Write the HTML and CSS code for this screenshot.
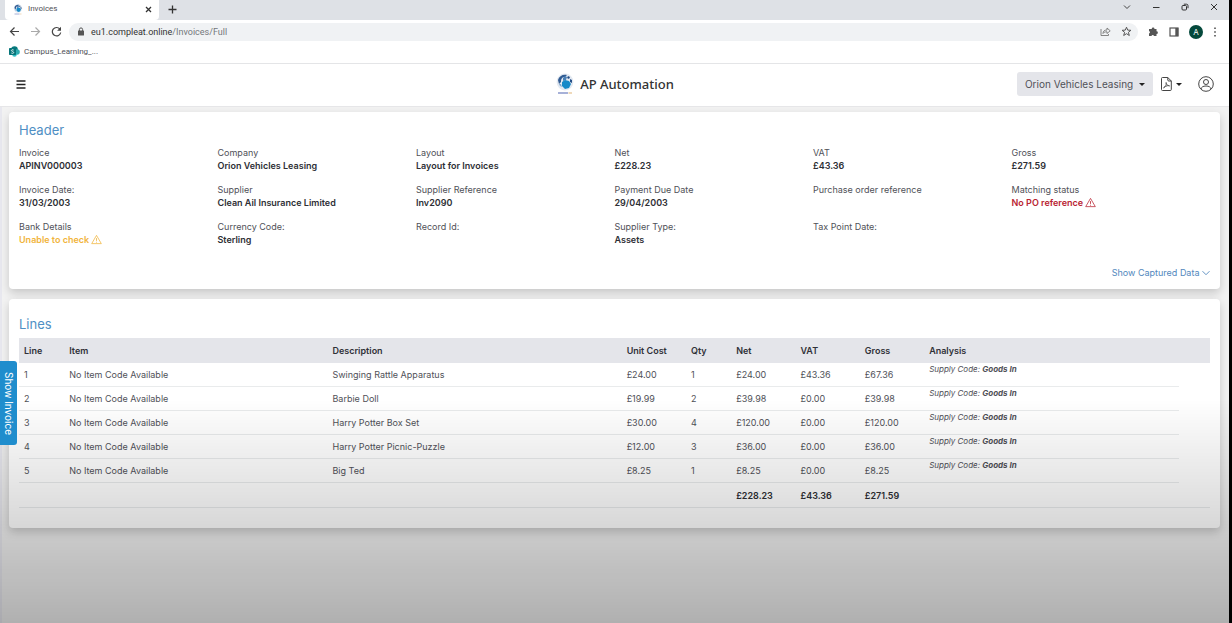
FILE: index.html
```html
<!DOCTYPE html>
<html lang="en">
<head>
<meta charset="utf-8">
<title>Invoices</title>
<link rel="stylesheet" href="styles.css">
</head>
<body>
<svg class="defs" aria-hidden="true">
  <symbol id="globe" viewBox="0 0 18 22">
    <circle cx="9" cy="9" r="8.4" fill="#e3e9f1"/>
    <path d="M2 7C3 3 7 1 11 2L9 4C6 4 5 6 5 9L3 11Z" fill="#315b92"/>
    <path d="M7 5l2-2 2 1-1 3-3 1z" fill="#4a80b5"/>
    <path d="M12 3l2 1-1 2-2-1zM14 6l2 1v3l-2-1z" fill="#244e86"/>
    <path d="M6 9l3-2 4 1 2 3-2 4-4 1-3-3z" fill="#1689c8"/>
    <path d="M3 11l2 0 1 3-2-1z" fill="#7ba7ce"/>
    <path d="M2 20h10" stroke="#8a97cb" stroke-width="1.500"/>
    <path d="M12.500 20h3.500" stroke="#e5c08b" stroke-width="1.200"/>
  </symbol>
  <symbol id="warn" viewBox="0 0 16 16">
    <path d="M8 2 15 14H1Z" fill="none" stroke="currentColor" stroke-linejoin="round" stroke-width="1.100"/>
    <path d="M8 6v4M8 11.300v1.200" stroke="currentColor" stroke-width="1.200"/>
  </symbol>
</svg>

<div class="tabs">
  <div class="tab">
    <svg class="favicon"><use href="#globe"/></svg>
    <span class="tab-name">Invoices</span>
    <button class="plain" aria-label="Close tab"><svg width="7" height="7" viewBox="0 0 7 7"><path d="M1 1l5 5M6 1L1 6" stroke="#333" stroke-width="1.300"/></svg></button>
  </div>
  <button class="plain new-tab" aria-label="New tab"><svg width="9" height="9" viewBox="0 0 9 9"><path d="M4.500 .5v8M.5 4.500h8" stroke="#333" stroke-width="1.300"/></svg></button>
  <div class="window-buttons">
    <button class="plain" aria-label="Search tabs"><svg width="8" height="8" viewBox="0 0 8 8"><path d="M1 2.500l3 3 3-3" fill="none" stroke="#444"/></svg></button>
    <button class="plain" aria-label="Minimize"><svg width="8" height="8" viewBox="0 0 8 8"><path d="M1 4.500h6.500" stroke="#333"/></svg></button>
    <button class="plain" aria-label="Restore"><svg width="8" height="8" viewBox="0 0 8 8"><rect x="1" y="2.500" width="4.500" height="4.500" rx="1" fill="none" stroke="#333"/><path d="M2.800 1.200h2.700q1.500 0 1.500 1.500v2.500" fill="none" stroke="#333"/></svg></button>
    <button class="plain" aria-label="Close"><svg width="8" height="8" viewBox="0 0 8 8"><path d="M1 1l6 6M7 1L1 7" stroke="#333"/></svg></button>
  </div>
</div>

<div class="toolbar">
  <button class="plain" aria-label="Back"><svg width="11" height="11" viewBox="0 0 11 11"><path d="M10 5.500H1.500M5.500 1.500l-4 4 4 4" fill="none" stroke="#444" stroke-width="1.200"/></svg></button>
  <button class="plain" aria-label="Forward"><svg width="11" height="11" viewBox="0 0 11 11"><path d="M1 5.500h8.500M5.500 1.500l4 4-4 4" fill="none" stroke="#aaa" stroke-width="1.200"/></svg></button>
  <button class="plain" aria-label="Reload"><svg width="11" height="11" viewBox="0 0 11 11"><path d="M8.800 3A4.200 4.200 0 1 0 9.700 6.500" fill="none" stroke="#444" stroke-width="1.200"/><path d="M10 .8v3.900H6.100z" fill="#444"/></svg></button>
  <div class="address">
    <svg width="8" height="9" viewBox="0 0 8 9"><rect x="1" y="3.500" width="6" height="5" rx=".6" fill="#555"/><path d="M2.400 4V2.500a1.600 1.600 0 0 1 3.200 0V4" fill="none" stroke="#555"/></svg>
    <span class="url">eu1.compleat.online<span class="path">/Invoices/Full</span></span>
    <button class="plain" aria-label="Share"><svg width="11" height="11" viewBox="0 0 11 11"><path d="M1 3v6.500h7.500V8M3 7.500C3 5 4.500 4 7 4V2l3.200 2.800L7 7.500V5.800C5 5.800 4 6.200 3 7.500z" fill="none" stroke="#777" stroke-width=".9"/></svg></button>
    <button class="plain" aria-label="Bookmark"><svg width="11" height="11" viewBox="0 0 11 11"><path d="M5.500 1.200l1.200 2.900 3.200.2-2.500 2 .9 3.200-2.800-1.800-2.800 1.800.9-3.200-2.500-2 3.200-.2z" fill="none" stroke="#555"/></svg></button>
  </div>
  <div class="extensions">
    <button class="plain" aria-label="Extensions"><svg width="11" height="11" viewBox="0 0 11 11"><path d="M1 3h2.700a1.400 1.400 0 1 1 2.800 0H8.500v2.300a1.400 1.400 0 1 1 0 2.800V10H6a1.300 1.300 0 0 0-2.500 0H1V7.500a1.300 1.300 0 0 0 0-2.500z" fill="#555"/></svg></button>
    <button class="plain" aria-label="Side panel"><svg width="10" height="10" viewBox="0 0 10 10"><rect x="1" y="1" width="8" height="8" fill="none" stroke="#555" stroke-width="1.200"/><path d="M6.300 1h3v8h-3z" fill="#555"/></svg></button>
    <button class="profile" aria-label="Profile A">A</button>
    <button class="plain" aria-label="Menu"><svg width="4" height="10" viewBox="0 0 4 10"><path d="M2 .5v1.500M2 4.200v1.500M2 8v1.500" stroke="#444" stroke-width="1.500"/></svg></button>
  </div>
</div>

<div class="bookmarks">
  <svg width="11" height="11" viewBox="0 0 11 11"><circle cx="5.500" cy="3.500" r="3.300" fill="#087a7d"/><circle cx="8" cy="6" r="2.800" fill="#2eabb0"/><circle cx="5.500" cy="8.500" r="2.300" fill="#31bfc4"/><rect y="2" width="7" height="7" rx=".7" fill="#06757a"/><path d="M4.700 4Q2.400 3.200 2.400 4.600C2.400 5.600 4.700 5.300 4.700 6.500 4.700 7.600 3 7.500 2.300 7" fill="none" stroke="#fff" stroke-width=".8"/></svg>
  <a href="#">Campus_Learning_...</a>
</div>

<header class="app-bar">
  <button class="plain" aria-label="Open menu"><svg width="10" height="9" viewBox="0 0 10 9"><path d="M.5 1h9M.5 4.500h9M.5 8h9" stroke="#222" stroke-width="1.500"/></svg></button>
  <h1><svg class="logo"><use href="#globe"/></svg>AP Automation</h1>
  <div class="actions">
    <button class="company">Orion Vehicles Leasing <span class="caret"></span></button>
    <button class="plain export" aria-label="Export PDF"><svg width="11" height="14" viewBox="0 0 11 14"><path d="M1.500.5h5.300l3.500 3.500v8.500q0 1-1 1h-7.800q-1 0-1-1v-11q0-1 1-1zM6.800.5V3q0 1 1 1h2.500" fill="none" stroke="#444"/><path d="M2.500 10.800C5 9.500 5.700 7 5.200 5.500 4.600 5.500 5 8 8.500 9 8.800 8.200 5 8.400 2.500 10.800z" fill="none" stroke="#444" stroke-width=".8"/></svg><span class="caret"></span></button>
    <button class="plain" aria-label="Account"><svg width="16" height="16" viewBox="0 0 16 16"><circle cx="8" cy="8" r="7.300" fill="none" stroke="#444"/><circle cx="8" cy="6" r="2.500" fill="none" stroke="#444"/><path d="M3 13c.5-2 2-3 5-3s4.500 1 5 3" fill="none" stroke="#444"/></svg></button>
  </div>
</header>

<main>
  <section class="card summary">
    <h2>Header</h2>
    <dl class="fields">
      <div><dt>Invoice</dt><dd>APINV000003</dd></div>
      <div><dt>Company</dt><dd>Orion Vehicles Leasing</dd></div>
      <div><dt>Layout</dt><dd>Layout for Invoices</dd></div>
      <div><dt>Net</dt><dd>£228.23</dd></div>
      <div><dt>VAT</dt><dd>£43.36</dd></div>
      <div><dt>Gross</dt><dd>£271.59</dd></div>
      <div><dt>Invoice Date:</dt><dd>31/03/2003</dd></div>
      <div><dt>Supplier</dt><dd>Clean Ail Insurance Limited</dd></div>
      <div><dt>Supplier Reference</dt><dd>Inv2090</dd></div>
      <div><dt>Payment Due Date</dt><dd>29/04/2003</dd></div>
      <div><dt>Purchase order reference</dt><dd></dd></div>
      <div><dt>Matching status</dt><dd class="error">No PO reference <svg class="warn"><use href="#warn"/></svg></dd></div>
      <div><dt>Bank Details</dt><dd class="caution">Unable to check <svg class="warn"><use href="#warn"/></svg></dd></div>
      <div><dt>Currency Code:</dt><dd>Sterling</dd></div>
      <div><dt>Record Id:</dt><dd></dd></div>
      <div><dt>Supplier Type:</dt><dd>Assets</dd></div>
      <div><dt>Tax Point Date:</dt><dd></dd></div>
    </dl>
    <a class="captured" href="#">Show Captured Data <svg width="8" height="8" viewBox="0 0 8 8"><path d="M.5 2.200L4 5.700l3.500-3.500" fill="none" stroke="currentColor" stroke-width=".9"/></svg></a>
  </section>

  <section class="card lines">
    <h2>Lines</h2>
    <table>
      <colgroup><col class="c-line"><col class="c-item"><col class="c-desc"><col class="c-money"><col class="c-qty"><col class="c-money"><col class="c-money"><col class="c-money"><col class="c-analysis"><col></colgroup>
      <thead><tr><th>Line</th><th>Item</th><th>Description</th><th>Unit Cost</th><th>Qty</th><th>Net</th><th>VAT</th><th>Gross</th><th>Analysis</th><th></th></tr></thead>
      <tbody>
        <tr><td>1</td><td>No Item Code Available</td><td>Swinging Rattle Apparatus</td><td>£24.00</td><td>1</td><td>£24.00</td><td>£43.36</td><td>£67.36</td><td class="analysis">Supply Code: <b>Goods In</b></td><td></td></tr>
        <tr><td>2</td><td>No Item Code Available</td><td>Barbie Doll</td><td>£19.99</td><td>2</td><td>£39.98</td><td>£0.00</td><td>£39.98</td><td class="analysis">Supply Code: <b>Goods In</b></td><td></td></tr>
        <tr><td>3</td><td>No Item Code Available</td><td>Harry Potter Box Set</td><td>£30.00</td><td>4</td><td>£120.00</td><td>£0.00</td><td>£120.00</td><td class="analysis">Supply Code: <b>Goods In</b></td><td></td></tr>
        <tr><td>4</td><td>No Item Code Available</td><td>Harry Potter Picnic-Puzzle</td><td>£12.00</td><td>3</td><td>£36.00</td><td>£0.00</td><td>£36.00</td><td class="analysis">Supply Code: <b>Goods In</b></td><td></td></tr>
        <tr><td>5</td><td>No Item Code Available</td><td>Big Ted</td><td>£8.25</td><td>1</td><td>£8.25</td><td>£0.00</td><td>£8.25</td><td class="analysis">Supply Code: <b>Goods In</b></td><td></td></tr>
      </tbody>
      <tfoot><tr><td></td><td></td><td></td><td></td><td></td><td>£228.23</td><td>£43.36</td><td>£271.59</td><td></td><td></td></tr></tfoot>
    </table>
  </section>
</main>
<div class="shade"></div>
<button class="show-invoice">Show Invoice</button>
</body>
</html>
```
FILE: styles.css
```css
* { box-sizing: border-box; }

body {
  margin: 0;
  min-height: 100vh;
  display: flex;
  flex-direction: column;
  border-right: 3px solid #000;
  background: #fff;
  color: #505158;
  font: 9px/13px Inter, "Open Sans", sans-serif;
}

h1, h2, dl, dd { margin: 0; }
svg { flex: none; }
button { font: inherit; color: inherit; border: 0; padding: 0; cursor: pointer; }
a { color: inherit; text-decoration: none; }
.defs { position: absolute; width: 0; height: 0; }
.plain { display: flex; align-items: center; background: none; }

.tabs {
  display: flex;
  align-items: center;
  height: 20px;
  padding-left: 5px;
  background: #dee1e6;
}
.tab {
  display: flex;
  align-items: center;
  gap: 5px;
  width: 154px;
  height: 20px;
  padding: 0 7px 2px 8px;
  border-radius: 0 0 4px 4px;
  background: #fff;
  font: 8px/12px Roboto, sans-serif;
}
.tab-name { flex: 1; }
.favicon { width: 10px; height: 11px; }
.new-tab { margin: 0 0 2px 9px; }
.window-buttons { display: flex; gap: 21px; margin: 0 11px 6px auto; }

.toolbar {
  display: flex;
  align-items: center;
  gap: 10px;
  height: 23px;
  padding: 0 12px 0 9px;
}
.address {
  flex: 1;
  display: flex;
  align-items: center;
  gap: 10px;
  height: 18px;
  margin-left: -3px;
  padding: 0 6px 0 8px;
  border-radius: 9px;
  background: #f0f2f4;
  font: 9px/14px Roboto, sans-serif;
}
.url { flex: 1; margin-left: -4px; color: #333; }
.path { color: #73777b; }
.extensions { display: flex; align-items: center; gap: 10px; }
.profile {
  width: 14px;
  height: 14px;
  border-radius: 50%;
  background: #05493c;
  color: #fff;
  font: 8px/14px Inter, sans-serif;
}

.bookmarks {
  display: flex;
  align-items: center;
  gap: 4px;
  height: 21px;
  padding: 0 9px 3px;
  border-bottom: 1px solid #e4e5e7;
  font: 8px/12px Roboto, sans-serif;
}

.app-bar {
  display: grid;
  grid-template-columns: 1fr auto 1fr;
  align-items: center;
  height: 43px;
  padding: 0 15px 2px 16px;
  border-bottom: 1px solid #e6e6e8;
}
.app-bar h1 {
  display: flex;
  align-items: center;
  gap: 6px;
  color: #333;
  font: 500 13px/20px "Noto Sans", sans-serif;
}
.logo { width: 18px; height: 22px; }
.actions { display: flex; align-items: center; justify-content: flex-end; gap: 8px; }
.company {
  height: 24px;
  padding: 0 8px;
  border-radius: 3px;
  background: #e4e5ea;
  font-size: 10px;
}
.caret {
  display: inline-block;
  margin-left: 3px;
  vertical-align: 2px;
  border: 3px solid transparent;
  border-top-color: #222;
  border-bottom: 0;
}
.export { gap: 1px; margin-right: 8px; }

main {
  flex: 1;
  display: flex;
  flex-direction: column;
  gap: 10px;
  padding: 5px 9px 9px 7px;
  border-left: 2px solid #e8e8ef;
  background: #f2f2f2;
}
.card {
  padding: 10px;
  border-radius: 4px;
  background: #fff;
  box-shadow: 0 4px 10px rgba(0, 0, 0, .18);
}
.card h2 { color: #4f8fc4; font-weight: 400; font-size: 13px; line-height: 16px; }
.summary { display: flex; flex-direction: column; }
.fields {
  display: grid;
  grid-template-columns: repeat(6, 1fr);
  row-gap: 10px;
  margin: 8px 0 19px;
}
.fields dt, .fields dd { height: 13px; white-space: nowrap; }
.fields dd { height: 14px; line-height: 14px; color: #2e2f35; font-weight: 600; }
.fields .error { color: #b92432; }
.fields .caution { color: #f1b43c; }
.warn { width: 11px; height: 11px; vertical-align: -2px; }
.captured { align-self: flex-end; color: #5288bd; }
.captured svg { vertical-align: -1px; }

.lines { padding: 17px 10px 20px; }
.lines h2 { margin-bottom: 6px; }
table { width: 100%; border-collapse: separate; border-spacing: 0; table-layout: fixed; }
th, td { height: 24px; padding: 0 0 0 5px; text-align: left; white-space: nowrap; }
th { height: 25px; background: #e4e5ea; color: #303138; font-weight: 600; }
td { border-bottom: 1px solid #e9ebec; }
tbody td:last-child { border-bottom: 0; }
tfoot td { height: 25px; color: #2e2f35; font-weight: 600; }
.analysis { vertical-align: top; font-size: 8px; line-height: 12px; font-style: italic; }
.c-line, .c-qty { width: 3.8%; }
.c-item { width: 22.1%; }
.c-desc { width: 24.7%; }
.c-money { width: 5.4%; }
.c-analysis { width: 21.4%; }

.shade {
  position: fixed;
  inset: 64% 3px 0 0;
  background: linear-gradient(transparent, rgba(0, 0, 0, .27));
  pointer-events: none;
}
.show-invoice {
  position: fixed;
  top: 58%;
  left: 0;
  width: 17px;
  height: 84px;
  border-radius: 0 3px 3px 0;
  background: #1f8dcd;
  color: #fff;
  font-size: 10px;
  line-height: 17px;
  writing-mode: vertical-rl;
}
```
